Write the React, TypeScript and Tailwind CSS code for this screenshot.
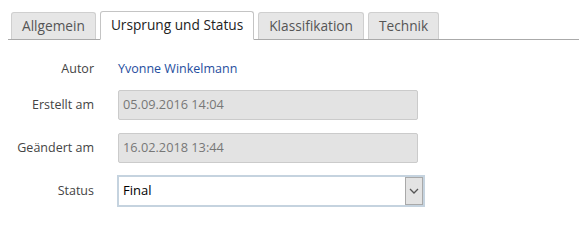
import React from 'react';

const tabs = ['Allgemein', 'Ursprung und Status', 'Klassifikation', 'Technik'];
const activeTab = 1;

const Row: React.FC<{ label: string; className?: string; children: React.ReactNode }> = ({ label, className, children }) => (
    <div className={`flex items-center ${className ?? ''}`}>
        <div className="w-[86px] text-right text-[12.5px] text-[#444]">{label}</div>
        <div className="ml-[24px] flex-1">{children}</div>
    </div>
);

export default function App() {
    return (
        <div className="w-[579px] h-[238px] bg-white pt-[11px] pl-[8px]" style={{ fontFamily: '"Open Sans", sans-serif' }}>
            {/* Tabs */}
            <div className="flex items-end gap-[4px] pl-[3px] border-b border-[#aaa] h-[29px]">
                {tabs.map((tab, i) =>
                    i === activeTab ? (
                        <div
                            key={tab}
                            className="h-[29px] -mb-px px-[10px] flex items-center bg-white border border-[#c4c4c4] border-b-white rounded-t-[3px] text-[13.7px] text-[#222]"
                        >
                            {tab}
                        </div>
                    ) : (
                        <div
                            key={tab}
                            className="h-[27px] px-[10px] flex items-center bg-[#e6e6e6] border border-b-0 border-[#cfcfcf] rounded-t-[3px] text-[13.7px] text-[#555]"
                        >
                            {tab}
                        </div>
                    )
                )}
            </div>

            {/* Fields */}
            <div className="pt-[19px]">
                <Row label="Autor" className="h-[20px]">
                    <span className="text-[12.5px] text-[#1f4e9e] relative -top-[2px]">Yvonne Winkelmann</span>
                </Row>

                <Row label="Erstellt am" className="mt-[11px]">
                    <div className="w-[300px] h-[30px] bg-[#e3e3e3] border border-[#cbcbcb] rounded-[2px] flex items-center px-[4px] text-[12.75px] text-[#777]">
                        05.09.2016 14:04
                    </div>
                </Row>

                <Row label="Geändert am" className="mt-[13px]">
                    <div className="w-[300px] h-[30px] bg-[#e3e3e3] border border-[#cbcbcb] rounded-[2px] flex items-center px-[4px] text-[12.75px] text-[#777]">
                        16.02.2018 13:44
                    </div>
                </Row>

                <Row label="Status" className="mt-[12px]">
                    <div className="-ml-px w-[308px] h-[32px] border-2 border-[#c5d3df] bg-white flex items-center justify-between pl-[4px] pr-0">
                        <span className="text-[13px] text-black">Final</span>
                        <div className="w-[18px] h-[28px] bg-[#e3e3e3] border border-[#a9a9a9] flex items-center justify-center">
                            <svg width="10" height="6" viewBox="0 0 10 6" fill="none">
                                <path d="M1 1l4 4 4-4" stroke="#555" strokeWidth="1.3" />
                            </svg>
                        </div>
                    </div>
                </Row>
            </div>
        </div>
    );
}
